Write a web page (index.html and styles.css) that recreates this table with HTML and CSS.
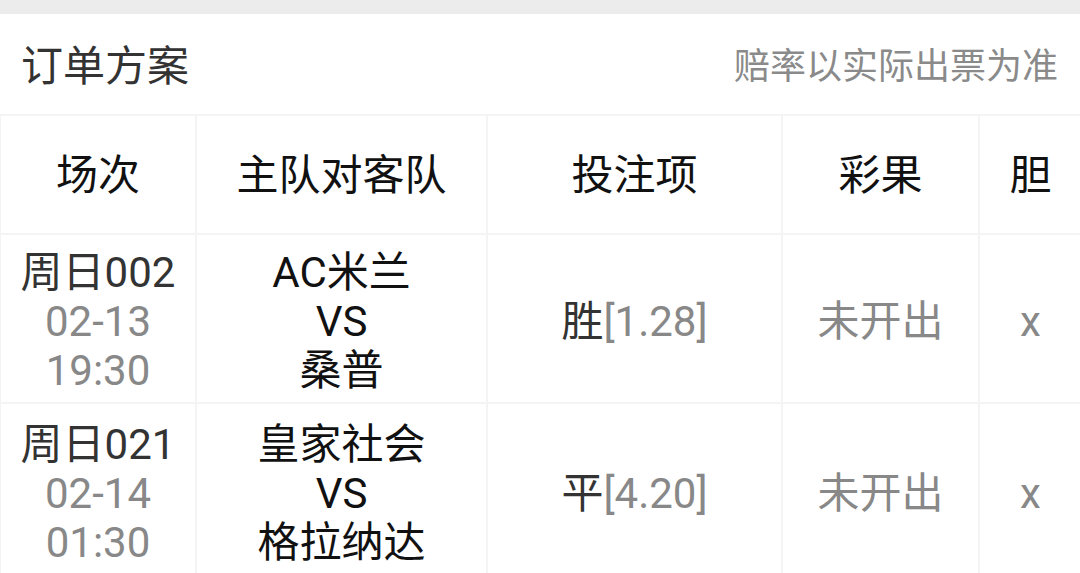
FILE: index.html
```html
<!DOCTYPE html>
<html lang="zh-CN">
<head>
<meta charset="utf-8">
<link rel="stylesheet" href="styles.css">
</head>
<body>
<div class="topbar"></div>
<div class="head">
  <div class="title">订单方案</div>
  <div class="note">赔率以实际出票为准</div>
</div>
<table class="grid">
  <colgroup>
    <col class="c1"><col class="c2"><col class="c3"><col class="c4"><col class="c5">
  </colgroup>
  <tr class="hrow">
    <th>场次</th><th>主队对客队</th><th>投注项</th><th>彩果</th><th>胆</th>
  </tr>
  <tr class="drow">
    <td><div class="dark">周日002</div><div class="gray">02-13</div><div class="gray">19:30</div></td>
    <td><div>AC米兰</div><div>VS</div><div>桑普</div></td>
    <td><span class="dark">胜</span><span class="gray">[1.28]</span></td>
    <td class="gray">未开出</td>
    <td class="gray">x</td>
  </tr>
  <tr class="drow last">
    <td><div class="dark">周日021</div><div class="gray">02-14</div><div class="gray">01:30</div></td>
    <td><div>皇家社会</div><div>VS</div><div>格拉纳达</div></td>
    <td><span class="dark">平</span><span class="gray">[4.20]</span></td>
    <td class="gray">未开出</td>
    <td class="gray">x</td>
  </tr>
</table>
</body>
</html>
```
FILE: styles.css
```css
html, body {
  margin: 0;
  padding: 0;
  background: #fff;
  overflow: hidden;
}
body {
  font-family: Roboto, "Noto Sans CJK SC", sans-serif;
  color: #111;
}
.topbar {
  height: 14px;
  background: #ececec;
}
.head {
  height: 100px;
  display: flex;
  align-items: center;
  justify-content: space-between;
  padding: 0 22px 0 21px;
  box-sizing: border-box;
}
.title {
  font-size: 42px;
  color: #333;
  line-height: 48px;
  margin-top: 6px;
}
.note {
  font-size: 36px;
  color: #8a8a8a;
  line-height: 44px;
  margin-top: 6px;
}
.grid {
  width: 1082px;
  border-collapse: collapse;
  table-layout: fixed;
  margin-left: -1px;
}
.c1 { width: 196px; }
.c2 { width: 291px; }
.c3 { width: 295px; }
.c4 { width: 197px; }
.c5 { width: 103px; }
.grid th, .grid td {
  border: 2px solid #f4f4f4;
  text-align: center;
  vertical-align: middle;
  padding: 0;
  font-size: 42px;
  font-weight: normal;
  line-height: 49px;
}
.hrow th {
  height: 115px;
  color: #111;
  padding-top: 2px;
}
.drow td {
  height: 162px;
  padding-top: 5px;
}
.drow.last td {
  height: 164px;
  padding-top: 7px;
}
.dark { color: #333; }
.gray { color: #888; }
```
